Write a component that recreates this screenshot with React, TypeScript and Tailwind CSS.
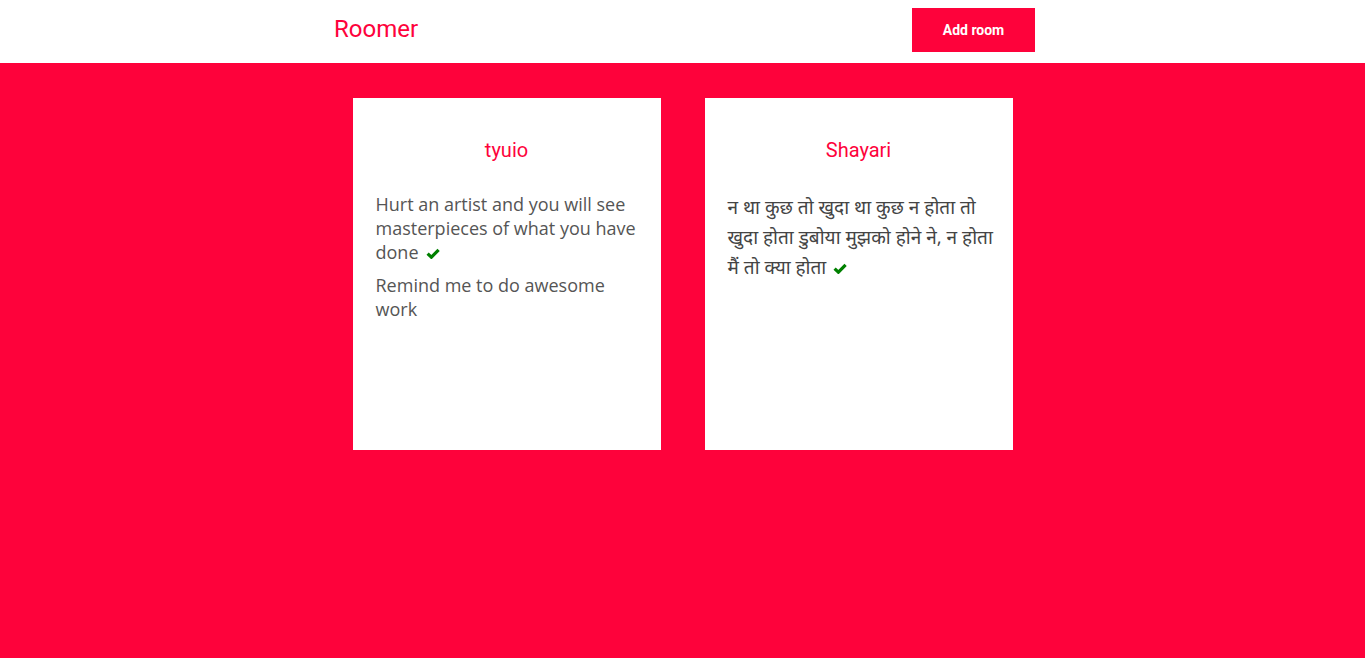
type Item = { text: string; done: boolean };
type Room = { name: string; items: Item[]; hindi?: boolean };

const rooms: Room[] = [
  {
    name: 'tyuio',
    items: [
      { text: 'Hurt an artist and you will see masterpieces of what you have done', done: true },
      { text: 'Remind me to do awesome work', done: false },
    ],
  },
  {
    name: 'Shayari',
    hindi: true,
    items: [
      {
        text: 'न था कुछ तो खुदा था कुछ न होता तो खुदा होता डुबोया मुझको होने ने, न होता मैं तो क्या होता',
        done: true,
      },
    ],
  },
];

function Check() {
  return (
    <svg viewBox="0 0 14 11" className="ml-[7px] inline-block h-[11px] w-[14px] align-[0px]">
      <path d="M1.6 5.6 L5.4 9.2 L12.6 1.8" fill="none" stroke="#008000" strokeWidth="3.2" />
    </svg>
  );
}

export default function App() {
  return (
    <div className="flex min-h-[658px] flex-col bg-[#fe023b]">
      <header className="h-[63px] bg-white">
        <div className="mx-auto flex h-full w-[705px] items-start justify-between pl-[4px]">
          <h1
            className="mt-[13px] text-[24px] leading-[32px] text-[#fe023b]"
            style={{ fontFamily: 'Roboto, sans-serif' }}
          >
            Roomer
          </h1>
          <button
            className="mt-[8px] h-[44px] w-[123px] bg-[#fe023b] text-[14px] font-bold text-white"
            style={{ fontFamily: 'Roboto, sans-serif' }}
          >
            Add room
          </button>
        </div>
      </header>

      <main className="flex justify-center gap-[44px] pt-[35px]">
        {rooms.map((room) => (
          <div key={room.name} className="h-[352px] w-[308px] bg-white pt-[38px] pr-[17px] pl-[23px]">
            <h2
              className="-ml-[6px] text-center text-[20px] leading-[28px] text-[#fe023b]"
              style={{ fontFamily: 'Roboto, sans-serif' }}
            >
              {room.name}
            </h2>
            <ul className="mt-[28px] flex flex-col gap-[9px]">
              {room.items.map((it) => (
                <li
                  key={it.text}
                  className={
                    room.hindi
                      ? 'text-[19px] leading-[30px] text-[#444]'
                      : 'text-[18px] leading-[24px] text-[#555]'
                  }
                  style={{ fontFamily: "'Open Sans', 'Noto Sans', sans-serif" }}
                >
                  {it.text}
                  {it.done && <Check />}
                </li>
              ))}
            </ul>
          </div>
        ))}
      </main>
    </div>
  );
}
